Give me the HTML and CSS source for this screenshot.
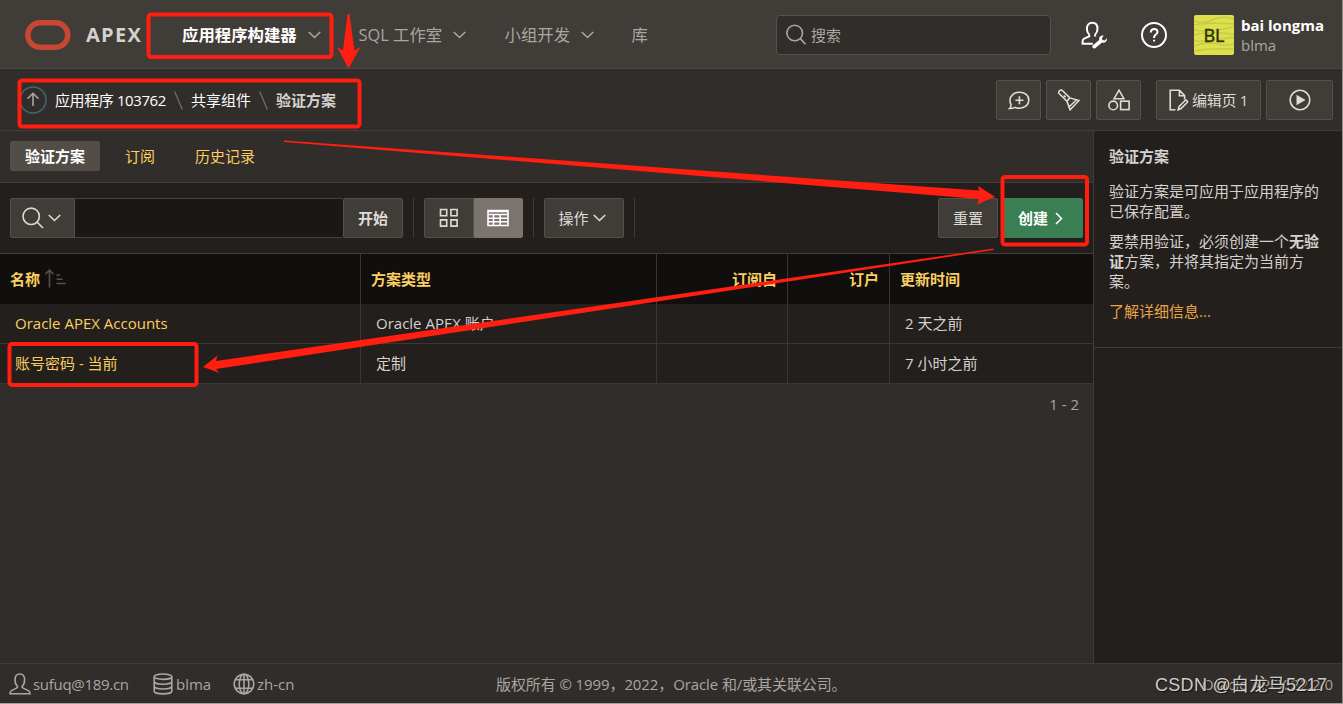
FILE: index.html
```
<!DOCTYPE html>
<html lang="zh-CN">

<head>
    <meta charset="utf-8">
    <title>验证方案</title>
    <link rel="stylesheet" href="styles.css">
</head>

<body>
    <div class="page">
        <header class="header">
            <svg class="logo" width="46" height="30" viewBox="0 0 46 30"><rect x="2.8" y="2.8" width="40" height="24.4" rx="12.2" /></svg>
            <div class="brand">APEX</div>
            <nav class="nav">
                <a class="nav-item nav-app active"><span>应用程序构建器</span><svg class="icon chevron" width="13" height="8" viewBox="0 0 13 8"><path d="M.8 1l5.7 5.5L12.2 1" /></svg></a>
                <a class="nav-item nav-sql"><span>SQL 工作室</span><svg class="icon chevron" width="13" height="8" viewBox="0 0 13 8"><path d="M.8 1l5.7 5.5L12.2 1" /></svg></a>
                <a class="nav-item nav-team"><span>小组开发</span><svg class="icon chevron" width="13" height="8" viewBox="0 0 13 8"><path d="M.8 1l5.7 5.5L12.2 1" /></svg></a>
                <a class="nav-item"><span>库</span></a>
            </nav>
            <div class="search">
                <svg class="icon" width="21" height="22" viewBox="0 0 21 22"><circle cx="8.7" cy="9" r="7.8" /><path d="M14.3 14.6l5.2 5.7" /></svg>
                <span>搜索</span>
            </div>
            <svg class="icon admin-icon" width="28" height="28" viewBox="0 0 28 28">
                <path d="M9.2 13.6C7.500 12 6.900 9.900 6.900 7.800 6.900 4 9 1.800 12.200 1.800s5.300 2.200 5.300 6c0 2.200-.7 4.300-2.400 5.800M9.200 13.600v1.700L4.200 17.700c-1.200.6-1.600 1.500-1.600 2.600v2.500h10.200M15.100 13.600v1.800" />
                <path class="wrench" d="M12.600 24.600l6.600-5.600c-.6-2.900 1.500-5 4.600-4.400l-1.800 2.300.4 2.100 2.300.4 2.100-2.100c.7 3.100-2 5.100-4.800 4.300L15.200 27.200c-1.600 1.200-3.800-1-2.600-2.600z" />
            </svg>
            <svg class="icon help-icon" width="28" height="28" viewBox="0 0 28 28">
                <circle cx="14" cy="14" r="12" />
                <path d="M10.800 11.400c0-2.200 1.400-3.500 3.400-3.500s3.300 1.200 3.300 3c0 2.500-3.400 2.800-3.400 5.400v.8M14.100 18.800v1.800" />
            </svg>
            <svg class="avatar" width="40" height="40" viewBox="0 0 40 40">
                <path d="M0 6q9 4 18-1t22-1M0 10q15-3 40-1M0 15q13 3 40-3M0 20q12-4 40-1M0 26q16 1 40-4M0 31q13-5 24-2t16-1M0 36q16-3 40-2" />
                <text x="20" y="27" text-anchor="middle">BL</text>
            </svg>
            <div class="user">
                <div class="user-name">bai longma</div>
                <div class="user-sub">blma</div>
            </div>
        </header>

        <div class="crumbbar">
            <svg class="icon up" width="28" height="28" viewBox="0 0 28 28"><circle cx="14" cy="14" r="13" /><path d="M14 20V7.500M8.500 12.800L14 7.300l5.500 5.500" /></svg>
            <a class="crumb crumb-app">应用程序 103762</a>
            <svg class="icon slash" width="9" height="19" viewBox="0 0 9 19"><path d="M.7.5l7.600 18" /></svg>
            <a class="crumb">共享组件</a>
            <svg class="icon slash" width="9" height="19" viewBox="0 0 9 19"><path d="M.7.5l7.600 18" /></svg>
            <span class="crumb current">验证方案</span>
            <div class="actions">
                <button class="btn square"><svg class="icon" width="22" height="22" viewBox="0 0 22 22"><path d="M1.5 19.5c1.3-1.2 1.7-2.4 1.5-4A7.3 7.3 0 0 1 2 11.3C2 6.8 6 3.2 11.5 3.2s9.3 3.400 9.300 8-4 8-9.300 8c-1.600 0-3-.3-4.200-.8-1.700.8-3.500 1.100-5.800 1.100zM11.400 7.300v8M7.400 11.300h8" /></svg></button>
                <button class="btn square"><svg class="icon" width="22" height="22" viewBox="0 0 22 22"><path d="M.9 4.200C0 2.700 2.300.4 3.900 1.200l7.900 7.700 9.200 2.600-8.900 9.300-3.200-8.600zM8.900 12.200l2.900-3.300M18.400 11l-8 7.500M5.800 6.500l1.800 1.700" /></svg></button>
                <button class="btn square"><svg class="icon" width="22" height="22" viewBox="0 0 22 22"><path d="M11 1.200l4.900 8.500H6.100z" /><circle cx="5.200" cy="16.400" r="4.300" /><rect x="12.600" y="12.200" width="8.500" height="8.400" /></svg></button>
                <button class="btn edit"><svg class="icon" width="20" height="22" viewBox="0 0 20 22"><path d="M6.500 20.800H1.200V1.200h9.300l5.100 5.400v4M10.400 1.200v5.600h5M9.200 20.800l1-3.400 6-5.900c1-.9 2.900.8 2 2l-6.100 6.100-2.900 1.200z" /></svg><span>编辑页 1</span></button>
                <button class="btn run"><svg class="icon" width="22" height="22" viewBox="0 0 22 22"><circle cx="11" cy="11" r="9.800" /><path class="solid" d="M7.500 5.800v10.400l9-5.200z" /></svg></button>
            </div>
        </div>

        <div class="body">
            <main class="main">
                <div class="tabs">
                    <a class="tab tab-active">验证方案</a>
                    <a class="tab">订阅</a>
                    <a class="tab">历史记录</a>
                </div>

                <div class="toolbar">
                    <button class="btn find"><svg class="icon" width="22" height="22" viewBox="0 0 22 22"><circle cx="9.200" cy="9.300" r="8.200" /><path d="M15 15l6 6" /></svg><svg class="icon" width="13" height="8" viewBox="0 0 13 8"><path d="M.8 1l5.700 5.500L12.200 1" /></svg></button>
                    <div class="find-input"></div>
                    <button class="btn go">开始</button>
                    <div class="divider"></div>
                    <button class="btn view"><svg class="icon" width="20" height="20" viewBox="0 0 20 20"><path d="M1.500 1.500h6.200v6.200H1.500zM11.900 1.500h6.200v6.200h-6.200zM1.500 11.900h6.200v6.200H1.500zM11.900 11.900h6.200v6.200h-6.200z" /></svg></button>
                    <button class="btn view view-on"><svg class="icon" width="22" height="18" viewBox="0 0 22 18"><path d="M1 1.500h20v15H1zM1 2.500h20M1 5.500h20M1 9.200h20M1 12.800h20M6.500 5v11.500M13.200 5v11.500" /></svg></button>
                    <div class="divider"></div>
                    <button class="btn menu"><span>操作</span><svg class="icon" width="13" height="8" viewBox="0 0 13 8"><path d="M.8 1l5.700 5.500L12.200 1" /></svg></button>
                    <div class="divider"></div>
                    <button class="btn reset">重置</button>
                    <button class="btn create"><span>创建</span><svg class="icon" width="8" height="13" viewBox="0 0 8 13"><path d="M1 1l5.500 5.500L1 12" /></svg></button>
                </div>

                <table class="report">
                    <colgroup><col class="col-name"><col class="col-type"><col class="col-from"><col class="col-sub"><col></colgroup>
                    <tr>
                        <th>名称<svg class="icon sort" width="21" height="19" viewBox="0 0 21 19"><path d="M4.500 18.500V1M.5 5.200l4-4.200 4 4.200M11.500 6h3.500M11.500 10.300h6M11.500 14.500h9" /></svg></th>
                        <th>方案类型</th>
                        <th class="right">订阅自</th>
                        <th class="right">订户</th>
                        <th>更新时间</th>
                    </tr>
                    <tr>
                        <td><a>Oracle APEX Accounts</a></td>
                        <td>Oracle APEX 账户</td>
                        <td></td>
                        <td></td>
                        <td>2 天之前</td>
                    </tr>
                    <tr>
                        <td><a>账号密码 - 当前</a></td>
                        <td>定制</td>
                        <td></td>
                        <td></td>
                        <td>7 小时之前</td>
                    </tr>
                </table>
                <div class="pagination">1 - 2</div>
            </main>

            <aside class="side">
                <div class="side-region">
                    <h2>验证方案</h2>
                    <p>验证方案是可应用于应用程序的<br>已保存配置。</p>
                    <p>要禁用验证，必须创建一个<b>无验<br>证</b>方案，并将其指定为当前方<br>案。</p>
                    <a>了解详细信息...</a>
                </div>
            </aside>
        </div>

        <footer class="footer">
            <svg class="icon" width="22" height="22" viewBox="0 0 22 22"><path d="M8.400 13.400C6.900 12 6 9.500 6 6.800 6 3.500 7.800 1 10.800 1s4.800 2.500 4.800 5.800c0 2.700-.9 5.200-2.400 6.600v1.200l6.200 3c1.200.6 1.600 1.300 1.600 3.200H1c0-1.900.4-2.600 1.600-3.200l5.800-3z" /></svg>
            <span class="foot-user">sufuq@189.cn</span>
            <svg class="icon" width="20" height="22" viewBox="0 0 20 22"><ellipse cx="10" cy="3.700" rx="8.800" ry="2.700" /><path d="M1.200 3.700v14.500c0 1.500 4 2.700 8.800 2.700s8.800-1.200 8.800-2.700V3.700M1.200 8.500c0 1.500 4 2.700 8.800 2.700s8.800-1.200 8.800-2.700M1.200 13.300c0 1.500 4 2.700 8.800 2.700s8.800-1.200 8.800-2.700" /></svg>
            <span class="foot-db">blma</span>
            <svg class="icon" width="22" height="22" viewBox="0 0 22 22"><circle cx="11" cy="11" r="9.800" /><ellipse cx="11" cy="11" rx="4.800" ry="9.800" /><path d="M11 1v20M2.500 6.800h17M2.500 15.200h17" /></svg>
            <span class="foot-lang">zh-cn</span>
            <span class="copyright">版权所有 © 1999，2022，Oracle 和/或其关联公司。</span>
            <span class="version">Oracle APEX 22.2.0</span>
        </footer>

        <!-- red callouts and arrows over the page -->
        <svg class="marks" width="1343" height="704" viewBox="0 0 1343 704">
            <rect x="148.5" y="14.5" width="183" height="42.5" rx="2.5" />
            <rect x="19.5" y="80.5" width="340" height="46" rx="2.5" />
            <rect x="1002.5" y="177" width="84.5" height="67.5" rx="2.5" />
            <rect x="9.5" y="344" width="187" height="41" rx="2.5" />
            <path d="M347.500 14h2l5 36.500 6-3.500-12 21.500L337 47l6 3.500z" />
            <path d="M284 140.500L979 190.500l-1-4.500 17 10.700-18 7.800 2-5.500L284 142z" />
            <path d="M993.500 248.500L216 361l1.500-5.500L203 367l16.500 6-3.500-4L993.500 250z" />
        </svg>
        <div class="watermark">CSDN @白龙马5217</div>
    </div>
</body>

</html>
```
FILE: styles.css
```
* {
    box-sizing: border-box;
}

body {
    margin: 0;
    overflow: hidden;
    background: #312d2a;
    color: #d5d1cd;
    font: 15px/20px "Open Sans", "Noto Sans CJK SC", sans-serif;
}

.page {
    position: relative;
    width: 1343px;
    height: 704px;
    display: flex;
    flex-direction: column;
    border-right: 1px solid #8f8b88;
    border-bottom: 1px solid #a5a19e;
}

.icon {
    flex: none;
    fill: none;
    stroke: currentColor;
    stroke-width: 1.6;
}

.header {
    height: 69px;
    flex: none;
    display: grid;
    grid-template-columns: 86px 96px 594px 304px 60px 54px 47px auto;
    align-items: center;
    padding-top: 2px;
    background: #403c38;
    border-bottom: 1px solid #4a4642;
}

.logo {
    margin-left: 25px;
    fill: none;
    stroke: #c74634;
    stroke-width: 5.5;
}

.brand {
    font-size: 20px;
    font-weight: bold;
    letter-spacing: 1.3px;
}

.nav {
    display: flex;
    font-size: 16.4px;
    color: #aaa6a1;
}

.nav-item {
    display: flex;
    align-items: center;
    gap: 11px;
    white-space: nowrap;
}

.nav-app {
    width: 176.5px;
}

.nav-sql {
    width: 146px;
}

.nav-team {
    width: 127px;
}

.active {
    font-weight: bold;
    color: #fff;
}

.chevron {
    color: #aaa6a1;
}

.search {
    width: 275px;
    height: 40px;
    display: flex;
    align-items: center;
    gap: 4px;
    padding-left: 9px;
    background: #312d2a;
    border: 1px solid #56514b;
    border-radius: 4px;
    color: #aaa6a1;
}

.admin-icon,
.help-icon {
    color: #fff;
    stroke-width: 2;
}

.wrench {
    fill: #fff;
    stroke: none;
}

.avatar {
    background: #dce04c;
    border-radius: 2px;
    fill: none;
    stroke: #c8cc45;
    stroke-width: 1.5;
}

.avatar text {
    fill: #2b310b;
    stroke: #2b310b;
    stroke-width: 0.5;
    font-size: 18px;
}

.user {
    height: 40px;
    color: #aaa6a1;
}

.user-name {
    font-weight: bold;
    color: #fff;
}

.crumbbar {
    height: 62px;
    flex: none;
    display: flex;
    align-items: center;
    padding: 1px 9px 0 19px;
    border-bottom: 1px solid #403c38;
    color: #fff;
}

.up {
    margin-right: 8px;
    color: #aaa6a1;
}

.up circle {
    stroke: #41686f;
}

.crumb-app {
    letter-spacing: -0.4px;
}

.slash {
    margin: 0 8px;
    color: #77726c;
    stroke-width: 1.2;
}

.current {
    color: #d5d1cd;
    font-weight: 600;
}

.actions {
    margin-left: auto;
    display: flex;
    gap: 5px;
}

.btn {
    height: 40px;
    flex: none;
    display: flex;
    align-items: center;
    justify-content: center;
    padding: 0;
    font: inherit;
    white-space: nowrap;
    color: #dfdbd7;
    background: #403c38;
    border: 1px solid #55504a;
    border-radius: 2px;
}

.square {
    width: 45px;
}

.edit {
    width: 105px;
    margin-left: 10px;
    gap: 3px;
    letter-spacing: -0.3px;
}

.run {
    width: 67px;
}

.solid {
    fill: currentColor;
    stroke: none;
}

.body {
    flex: 1;
    display: flex;
}

.main {
    width: 1093px;
}

.tabs {
    height: 52px;
    display: flex;
    align-items: center;
    padding: 0 0 1px 10px;
    border-bottom: 1px solid #403c38;
    color: #fbce62;
}

.tab {
    padding: 5px 15px;
    margin-right: 10px;
    white-space: nowrap;
}

.tab-active {
    background: #524e47;
    border-radius: 2px;
    color: #fff;
    font-weight: bold;
}

.toolbar {
    height: 71px;
    display: flex;
    align-items: center;
    padding: 0 10px;
    background: #231f1c;
    border-bottom: 1px solid #403c38;
}

.find {
    width: 65px;
    gap: 4px;
    padding-right: 3px;
    border-radius: 2px 0 0 2px;
}

.find-input {
    width: 268px;
    height: 40px;
    background: #191816;
    border: solid #45413c;
    border-width: 1px 0;
}

.go {
    width: 60px;
    font-weight: 600;
}

.divider {
    width: 1px;
    height: 40px;
    margin: 0 10px;
    background: #3d3935;
}

.view {
    width: 50px;
    border-radius: 2px 0 0 2px;
}

.view-on {
    width: 49px;
    padding-right: 2px;
    color: #fff;
    background: #7a736e;
    border-color: #7a736e;
    border-radius: 0 2px 2px 0;
}

.menu {
    width: 80px;
    gap: 4px;
    padding-right: 4px;
}

.reset {
    width: 60px;
    margin-left: auto;
    margin-right: 4px;
}

.create {
    width: 81px;
    gap: 7px;
    padding-right: 4px;
    color: #fff;
    font-weight: bold;
    background: #397f53;
    border-color: #397f53;
}

.report {
    width: 1093px;
    table-layout: fixed;
    border-spacing: 0;
    background: #231f1c;
}

.col-name {
    width: 361px;
}

.col-type {
    width: 296px;
}

.col-from {
    width: 131px;
}

.col-sub {
    width: 102px;
}

th {
    height: 50px;
    padding: 0 10px;
    text-align: left;
    background: #100f0e;
    border-right: 1px solid #3b3733;
    color: #fbce62;
}

.right {
    text-align: right;
}

td {
    height: 40px;
    padding: 0 15px 2px;
    border-right: 1px solid #3b3733;
    border-bottom: 1px solid #3b3733;
}

th:last-child,
td:last-child {
    border-right: 0;
}

td a {
    color: #fbce62;
}

.sort {
    margin-left: 5px;
    vertical-align: -3px;
    color: #56524e;
}

.pagination {
    padding: 10px 14px;
    text-align: right;
    color: #aaa6a1;
}

.side {
    flex: 1;
    background: #231f1c;
    border-left: 1px solid #403c38;
}

.side-region {
    height: 217px;
    padding: 15px 0 0 15px;
    border-bottom: 1px solid #403c38;
    white-space: nowrap;
}

.side h2 {
    margin: 0 0 15px;
    font-size: 15px;
    line-height: 20px;
}

.side p {
    margin: 0 0 10px;
}

.side a {
    color: #e9a348;
}

.footer {
    height: 40px;
    flex: none;
    display: flex;
    align-items: center;
    padding: 0 9px;
    border-top: 1px solid #403c38;
    color: #aaa6a1;
    white-space: nowrap;
}

.foot-user {
    width: 122px;
    padding-left: 2px;
    letter-spacing: -0.3px;
}

.foot-db {
    width: 60px;
    padding-left: 3px;
}

.foot-lang {
    width: 241px;
    padding-left: 2px;
}

.copyright {
    letter-spacing: -0.1px;
}

.version {
    margin-left: auto;
}

.marks {
    position: absolute;
    left: 0;
    top: 0;
    fill: #ff1e10;
}

.marks rect {
    fill: none;
    stroke: #ff1e10;
    stroke-width: 4;
}

.watermark {
    position: absolute;
    left: 1155px;
    top: 675px;
    font: 18px/20px "Liberation Sans", "Noto Sans CJK SC", sans-serif;
    letter-spacing: 0.3px;
    color: #cfccc9;
    text-shadow: 1px 1px 1px #111;
    white-space: nowrap;
}
```
